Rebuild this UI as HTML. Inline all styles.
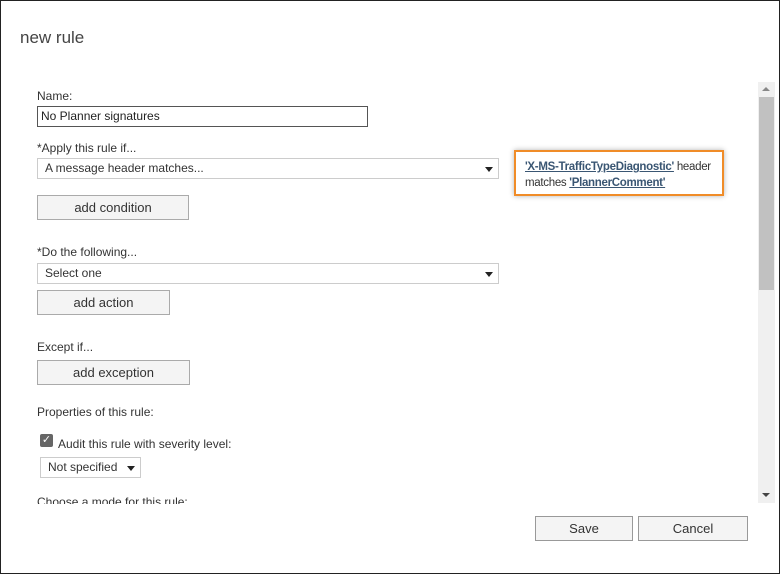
<!DOCTYPE html>
<html><head><style>
body{margin:0;width:780px;height:574px;overflow:hidden;background:#fff;font-family:"Liberation Sans",sans-serif;color:#333;font-size:12px}
.frame{position:absolute;left:0;top:0;width:778px;height:572px;border:1px solid #222}
.a{position:absolute;white-space:nowrap}
.btn{position:absolute;background:#f4f4f4;border:1px solid #aaa;box-sizing:border-box;text-align:center;font-size:13px;color:#333}
.sel{position:absolute;border:1px solid #ccc;box-sizing:border-box;background:#fff;padding-left:7px;font-size:12px}
.tri{position:absolute;right:5px;top:8px;width:0;height:0;border-left:4px solid transparent;border-right:4px solid transparent;border-top:5px solid #222}
a{color:#3a5673;text-decoration:underline;font-weight:bold}
</style></head><body>
<div class="frame"></div>
<div class="a" style="left:20px;top:28px;font-size:17px;color:#444">new rule</div>
<div class="a" style="left:37px;top:89px">Name:</div>
<div class="sel" style="left:37px;top:106px;width:331px;height:21px;border-color:#555;line-height:19px;padding-left:3px;color:#222">No Planner signatures</div>
<div class="a" style="left:37px;top:141px">*Apply this rule if...</div>
<div class="sel" style="left:37px;top:158px;width:462px;height:21px;line-height:19px">A message header matches...<div class="tri"></div></div>
<div class="a" style="left:514px;top:150px;width:210px;height:46px;border:2px solid #f08c28;box-sizing:border-box;box-shadow:0 0 5px rgba(0,0,0,.3);padding:7px 0 0 9px;line-height:16px;white-space:normal;font-size:11.5px;letter-spacing:-0.3px"><a>'X-MS-TrafficTypeDiagnostic'</a> header<br>matches <a>'PlannerComment'</a></div>
<div class="btn" style="left:37px;top:195px;width:152px;height:25px;line-height:23px">add condition</div>
<div class="a" style="left:37px;top:245px">*Do the following...</div>
<div class="sel" style="left:37px;top:263px;width:462px;height:21px;line-height:19px">Select one<div class="tri"></div></div>
<div class="btn" style="left:37px;top:290px;width:133px;height:25px;line-height:23px">add action</div>
<div class="a" style="left:37px;top:340px">Except if...</div>
<div class="btn" style="left:37px;top:360px;width:153px;height:25px;line-height:23px">add exception</div>
<div class="a" style="left:37px;top:405px">Properties of this rule:</div>
<div class="a" style="left:40px;top:434px;width:13px;height:13px;background:#666;border-radius:2px;color:#fff;font-size:11px;line-height:13px;text-align:center">✓</div>
<div class="a" style="left:58px;top:437px">Audit this rule with severity level:</div>
<div class="sel" style="left:40px;top:457px;width:101px;height:21px;line-height:19px;padding-left:7px">Not specified<div class="tri"></div></div>
<div class="a" style="left:37px;top:495px;height:9px;overflow:hidden">Choose a mode for this rule:</div>
<div class="a" style="left:758px;top:82px;width:17px;height:421px;background:#f0f0f0"></div>
<div class="a" style="left:759px;top:97px;width:15px;height:193px;background:#c1c1c1"></div>
<div class="a" style="left:762px;top:87px;border-left:4px solid transparent;border-right:4px solid transparent;border-bottom:4px solid #888"></div>
<div class="a" style="left:762px;top:493px;border-left:4px solid transparent;border-right:4px solid transparent;border-top:4px solid #444"></div>
<div class="btn" style="left:535px;top:516px;width:98px;height:25px;line-height:23px;border-color:#999">Save</div>
<div class="btn" style="left:638px;top:516px;width:110px;height:25px;line-height:23px;border-color:#999">Cancel</div>
</body></html>
